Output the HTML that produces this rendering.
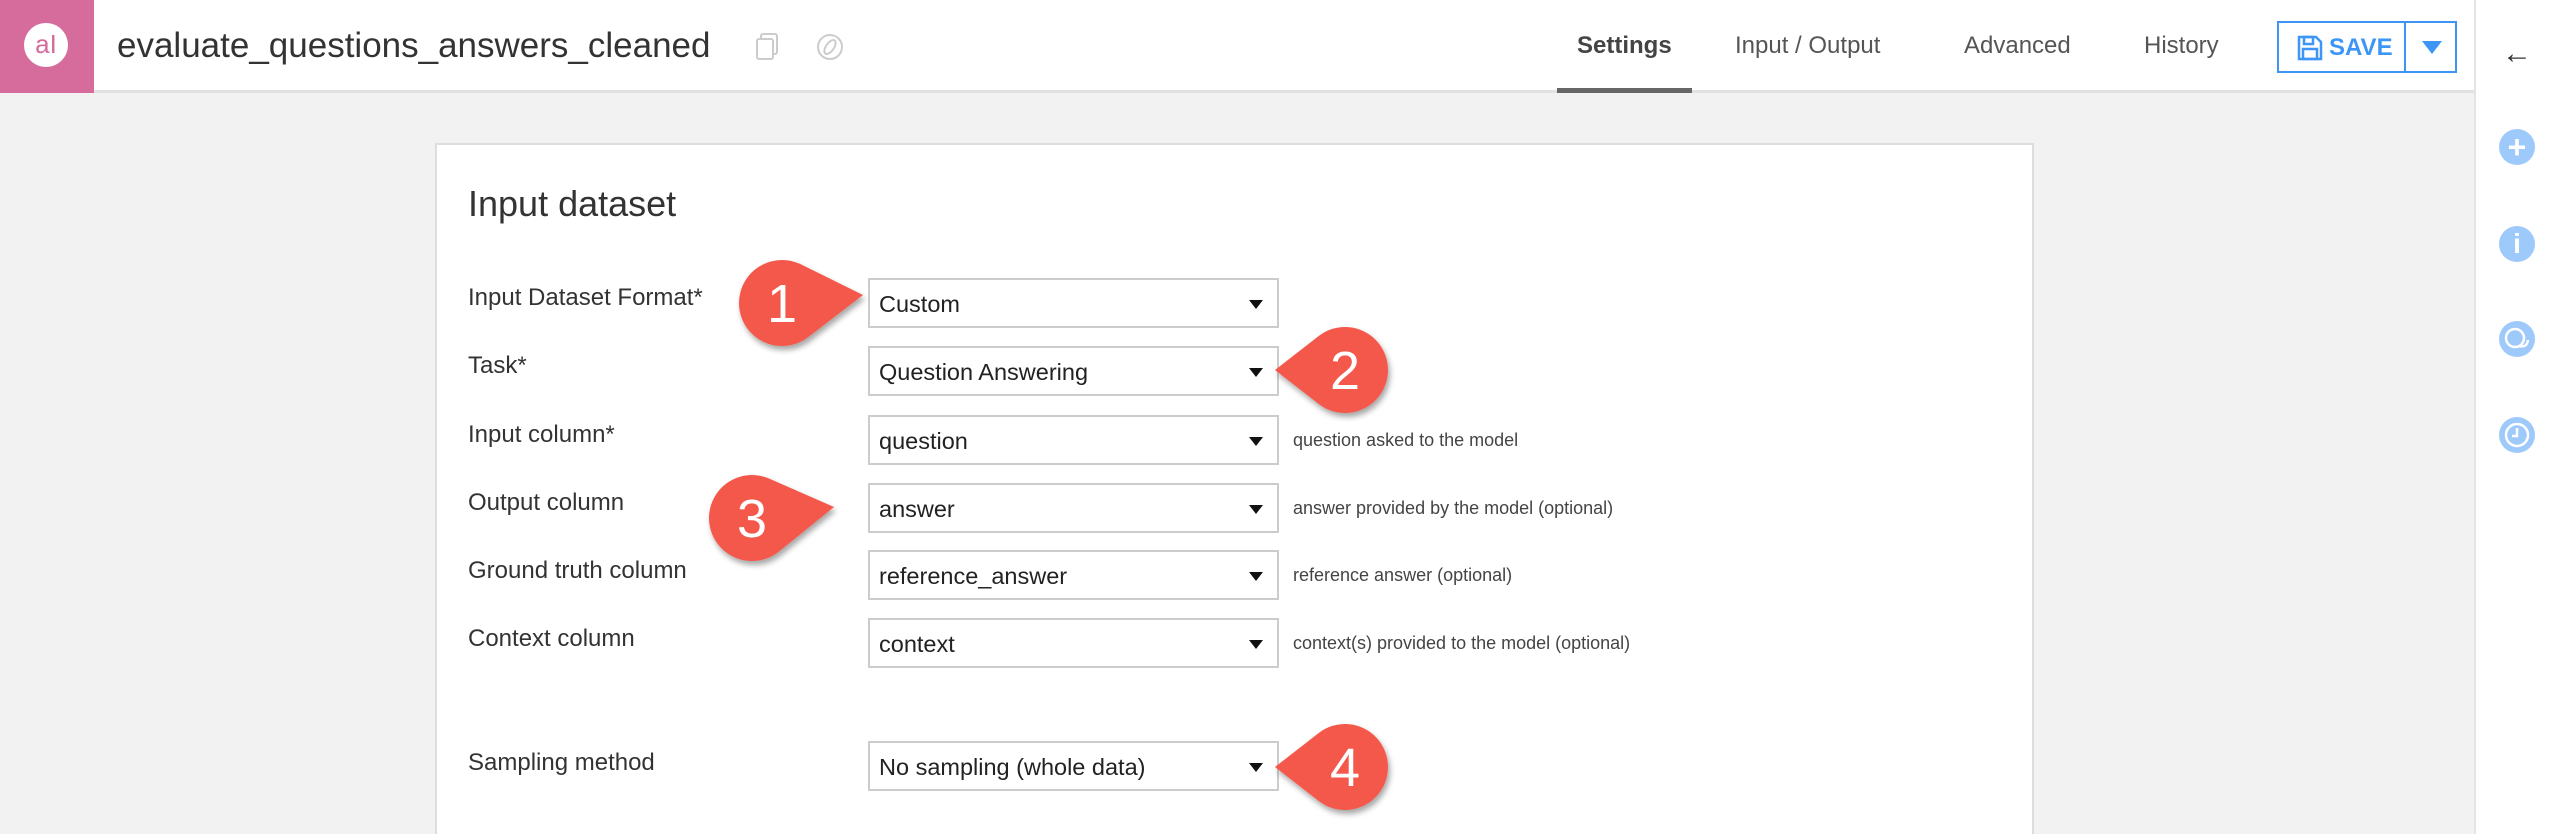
<!DOCTYPE html>
<html style="overflow:hidden;width:2554px;height:834px"><head><meta charset="utf-8"><style>
*{margin:0;padding:0;box-sizing:border-box}
body{width:2554px;height:834px;overflow:hidden;background:#f2f2f2;font-family:"Liberation Sans",sans-serif;position:relative;color:#333}
.hdr{position:absolute;left:0;top:0;width:2474px;height:93px;background:#fff;border-bottom:3px solid #e2e2e2}
.logo{position:absolute;left:0;top:0;width:94px;height:93px;background:#d66c9c}
.logo .c{position:absolute;left:24px;top:23px;width:44px;height:44px;border-radius:50%;background:#fff;color:#d66c9c;font-size:26px;text-align:center;line-height:42px}
.title{position:absolute;left:117px;top:26px;font-size:35px;color:#333}
.tab{position:absolute;top:32px;font-size:24px;color:#555}
.save{position:absolute;left:2277px;top:21px;width:180px;height:52px;border:2px solid #3d96f5;background:#fff}
.side{position:absolute;left:2474px;top:0;width:80px;height:834px;background:#fff;border-left:2px solid #e4e4e4}
.ic{position:absolute;left:2499px;width:36px;height:36px;border-radius:50%;background:#9ec9fb;color:#fff;text-align:center;font-weight:bold}
.panel{position:absolute;left:435px;top:143px;width:1599px;height:691px;background:#fff;border:2px solid #ddd;border-bottom:none}
.h{position:absolute;left:468px;top:183px;font-size:36px;color:#333}
.lbl{position:absolute;left:468px;font-size:24px;color:#333}
.sel{position:absolute;left:868px;width:411px;height:50px;border:2px solid #ccc;background:#fff;font-size:23.5px;color:#222;padding:11px 0 0 9px}
.sel:after{content:"";position:absolute;right:14px;top:20px;border-left:7px solid transparent;border-right:7px solid transparent;border-top:9px solid #111}
.help{position:absolute;left:1293px;font-size:18px;color:#444}
</style></head><body>
<div class="hdr">
 <div class="logo"><div class="c">aI</div></div>
 <div class="title">evaluate_questions_answers_cleaned</div>
 <svg style="position:absolute;left:755px;top:32px" width="30" height="30"><rect x="6" y="2" width="16" height="20" rx="2" fill="none" stroke="#ccc" stroke-width="2"/><rect x="2" y="7" width="16" height="20" rx="2" fill="#fff" stroke="#ccc" stroke-width="2"/></svg>
 <svg style="position:absolute;left:815px;top:32px" width="30" height="30"><circle cx="15" cy="15" r="12" fill="none" stroke="#ccc" stroke-width="2"/><ellipse cx="15" cy="15" rx="4" ry="8" transform="rotate(35 15 15)" fill="none" stroke="#ccc" stroke-width="2"/></svg>
 <div class="tab" style="left:1577px;font-weight:bold;color:#444">Settings</div>
 <div style="position:absolute;left:1557px;top:88px;width:135px;height:5px;background:#666"></div>
 <div class="tab" style="left:1735px">Input / Output</div>
 <div class="tab" style="left:1964px">Advanced</div>
 <div class="tab" style="left:2144px">History</div>
 <div class="save">
  <svg style="position:absolute;left:17px;top:11px" width="28" height="28"><path d="M3 3h17l5 5v17H3z" fill="none" stroke="#3d96f5" stroke-width="2.5"/><rect x="8" y="3" width="9" height="7" fill="none" stroke="#3d96f5" stroke-width="2.5"/><rect x="7" y="15" width="14" height="10" fill="none" stroke="#3d96f5" stroke-width="2.5"/></svg>
  <div style="position:absolute;left:50px;top:11px;font-size:24px;font-weight:bold;color:#3d96f5">SAVE</div>
  <div style="position:absolute;left:125px;top:0;width:2px;height:48px;background:#3d96f5"></div>
  <div style="position:absolute;left:143px;top:18px;border-left:10px solid transparent;border-right:10px solid transparent;border-top:13px solid #3d96f5"></div>
 </div>
</div>
<div class="side"></div>
<div style="position:absolute;left:2502px;top:37px;font-size:30px;color:#333">←</div>
<div class="ic" style="top:129px;font-size:32px;line-height:36px">+</div>
<div class="ic" style="top:226px;font-size:28px;line-height:36px">i</div>
<div class="ic" style="top:321px"><svg width="36" height="36"><circle cx="16" cy="17" r="9" fill="none" stroke="#fff" stroke-width="2.5"/><path d="M20 25 q8 2 9 -6" fill="none" stroke="#fff" stroke-width="2.5"/></svg></div>
<div class="ic" style="top:417px"><svg width="36" height="36"><circle cx="18" cy="18" r="11" fill="none" stroke="#fff" stroke-width="2.5"/><path d="M18 11v8h-5" fill="none" stroke="#fff" stroke-width="2.5"/></svg></div>
<div class="panel"></div>
<div class="h">Input dataset</div>
<div class="lbl" style="top:284px">Input Dataset Format*</div>
<div class="lbl" style="top:352px">Task*</div>
<div class="lbl" style="top:421px">Input column*</div>
<div class="lbl" style="top:489px">Output column</div>
<div class="lbl" style="top:557px">Ground truth column</div>
<div class="lbl" style="top:625px">Context column</div>
<div class="lbl" style="top:749px">Sampling method</div>
<div class="sel" style="top:278px">Custom</div>
<div class="sel" style="top:346px">Question Answering</div>
<div class="sel" style="top:415px">question</div>
<div class="sel" style="top:483px">answer</div>
<div class="sel" style="top:550px">reference_answer</div>
<div class="sel" style="top:618px">context</div>
<div class="sel" style="top:741px">No sampling (whole data)</div>
<div class="help" style="top:430px">question asked to the model</div>
<div class="help" style="top:498px">answer provided by the model (optional)</div>
<div class="help" style="top:565px">reference answer (optional)</div>
<div class="help" style="top:633px">context(s) provided to the model (optional)</div>
<svg id="cs" style="position:absolute;left:0;top:0" width="2554" height="834">
<defs><filter id="sh" x="-50%" y="-50%" width="200%" height="200%"><feDropShadow dx="2" dy="4" stdDeviation="3" flood-color="#000" flood-opacity="0.35"/></filter></defs>
</svg>
<script>
var cs=[[782,303,863,295,"1"],[1345,370,1275,370,"2"],[752,518,834,507,"3"],[1345,767,1275,767,"4"]];
var s=document.getElementById('cs'),h='';
cs.forEach(function(c){var r=43,dx=c[2]-c[0],dy=c[3]-c[1],d=Math.sqrt(dx*dx+dy*dy),th=Math.atan2(dy,dx),a=Math.acos(r/d);
var x1=c[0]+r*Math.cos(th+a),y1=c[1]+r*Math.sin(th+a),x2=c[0]+r*Math.cos(th-a),y2=c[1]+r*Math.sin(th-a);
h+='<path filter="url(#sh)" fill="#f4584c" d="M'+c[2]+' '+c[3]+'L'+x1+' '+y1+'A'+r+' '+r+' 0 1 1 '+x2+' '+y2+'Z"/>';
h+='<text x="'+c[0]+'" y="'+(c[1]+19)+'" text-anchor="middle" font-family="Liberation Sans,sans-serif" font-size="54" fill="#fff">'+c[4]+'</text>';});
s.innerHTML+=h;
</script>
</body></html>
